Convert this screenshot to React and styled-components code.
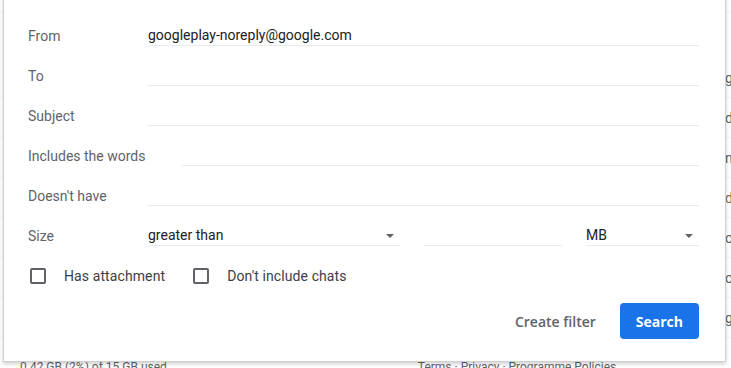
import React from 'react';
import styled, { createGlobalStyle } from 'styled-components';

const GlobalStyle = createGlobalStyle`
  html, body {
    margin: 0;
    padding: 0;
    background: #fff;
    font-family: Roboto, "Liberation Sans", Arial, sans-serif;
  }
`;

const Page = styled.div`
  position: relative;
  width: 731px;
  height: 368px;
  overflow: hidden;
  background: #fff;
`;

const Toolbar = styled.div`
  height: 11px;
  border-bottom: 1px solid #f1f3f4;
  margin-bottom: 46px;
`;

const MailRow = styled.div`
  box-sizing: border-box;
  height: 40px;
  border-bottom: 1px solid #f1f3f4;
  display: flex;
  align-items: center;
  padding-left: 725px;
  font-size: 14px;
  color: ${p => p.$color || '#5f6368'};
  white-space: nowrap;
`;

const Footer = styled.div`
  display: flex;
  margin-top: 21px;
  padding-left: 20px;
  font-size: 12px;
  line-height: 16px;
  color: #5f6368;
  white-space: nowrap;
  span:last-child {
    margin-left: 251px;
  }
`;

const Dialog = styled.div`
  position: absolute;
  top: -4px;
  left: 3px;
  box-sizing: border-box;
  width: 723px;
  height: 366px;
  background: #fff;
  border: 1px solid #cfcfcf;
  box-shadow: 0 2px 4px rgba(0, 0, 0, 0.18);
  padding: 9px 26px 0 24px;
  display: flex;
  flex-direction: column;
`;

const Field = styled.div`
  display: flex;
  align-items: flex-end;
  height: 40px;
`;

const Label = styled.div`
  box-sizing: border-box;
  min-width: 120px;
  padding-right: 37px;
  font-size: 14px;
  line-height: 20px;
  color: #5f6368;
  white-space: nowrap;
`;

const Input = styled.div`
  flex: ${p => (p.$width ? `0 0 ${p.$width}px` : '1')};
  margin-right: ${p => p.$gap || 0}px;
  height: 21px;
  border-bottom: 1px solid #e8eaed;
  font-size: 14px;
  line-height: 20px;
  color: #202124;
  display: flex;
  align-items: center;
  justify-content: space-between;
  white-space: nowrap;
`;

const Arrow = styled.span`
  width: 0;
  height: 0;
  border-left: 4px solid transparent;
  border-right: 4px solid transparent;
  border-top: 4px solid #5f6368;
  margin-right: 6px;
  margin-top: 2px;
`;

const CheckRow = styled.div`
  display: flex;
  align-items: center;
  margin-top: 22px;
  padding-left: 2px;
  height: 16px;
`;

const Check = styled.label`
  display: flex;
  align-items: center;
  gap: 18px;
  margin-right: 28px;
  font-size: 14px;
  letter-spacing: 0.1px;
  color: #3c4043;
`;

const Box = styled.span`
  box-sizing: border-box;
  width: 16px;
  height: 16px;
  border: 2px solid #5f6368;
  border-radius: 2px;
`;

const Actions = styled.div`
  display: flex;
  justify-content: flex-end;
  align-items: center;
  margin-top: 19px;
`;

const Button = styled.button`
  height: 36px;
  border: none;
  border-radius: 4px;
  font-family: "Open Sans", Roboto, "Liberation Sans", Arial, sans-serif;
  font-size: 14px;
  font-weight: ${p => (p.$primary ? 700 : 600)};
  cursor: pointer;
  padding: ${p => (p.$primary ? '0 16px' : '0 12px')};
  margin-left: ${p => (p.$primary ? '12px' : '0')};
  background: ${p => (p.$primary ? '#1a73e8' : 'transparent')};
  color: ${p => (p.$primary ? '#fff' : '#5f6368')};
`;

const mails = [
  ['google', '#5f6368'],
  ['download', '#5f6368'],
  ["n't", '#5f6368'],
  ['done', '#8a6d3b'],
  ['out', '#5f6368'],
  ['on', '#5f6368'],
  ['google', '#5f6368'],
];

export default function App() {
  return (
    <Page>
      <GlobalStyle />
      <Toolbar />
      {mails.map(([t, c], i) => (
        <MailRow key={i} $color={c}>{t}</MailRow>
      ))}
      <Footer>
        <span>0.42 GB (2%) of 15 GB used</span>
        <span>Terms · Privacy · Programme Policies</span>
      </Footer>

      <Dialog>
        <Field>
          <Label>From</Label>
          <Input>googleplay-noreply@google.com</Input>
        </Field>
        <Field>
          <Label>To</Label>
          <Input />
        </Field>
        <Field>
          <Label>Subject</Label>
          <Input />
        </Field>
        <Field>
          <Label>Includes the words</Label>
          <Input />
        </Field>
        <Field>
          <Label>Doesn't have</Label>
          <Input />
        </Field>
        <Field>
          <Label>Size</Label>
          <Input $width={252} $gap={24}>
            greater than
            <Arrow />
          </Input>
          <Input $width={138} $gap={24} />
          <Input>
            MB
            <Arrow />
          </Input>
        </Field>
        <CheckRow>
          <Check>
            <Box />
            Has attachment
          </Check>
          <Check>
            <Box />
            Don't include chats
          </Check>
        </CheckRow>
        <Actions>
          <Button>Create filter</Button>
          <Button $primary>Search</Button>
        </Actions>
      </Dialog>
    </Page>
  );
}
